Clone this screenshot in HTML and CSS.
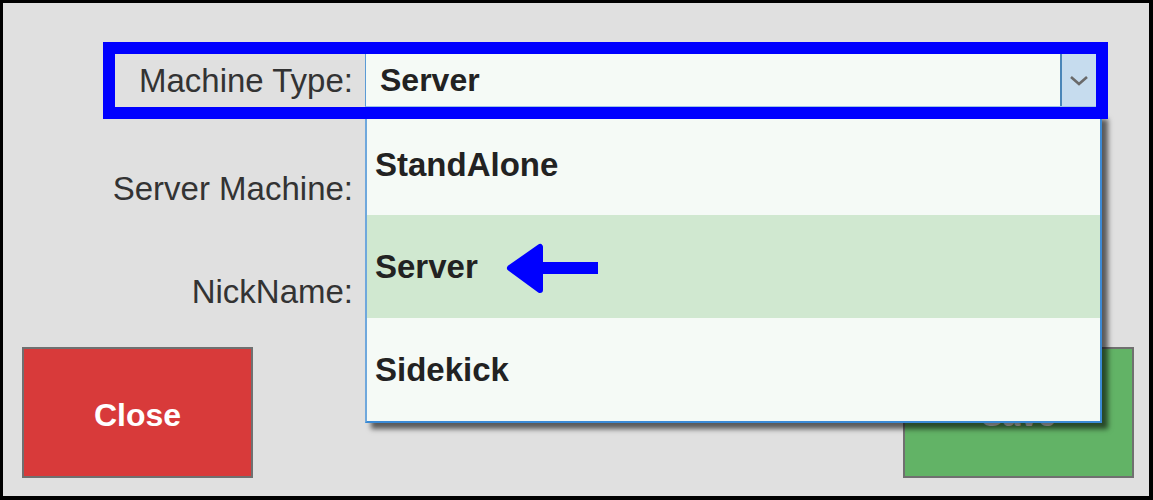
FILE: index.html
```html
<!DOCTYPE html>
<html>
<head>
<meta charset="utf-8">
<link rel="stylesheet" href="styles.css">
</head>
<body>
<div class="frame">
  <div class="row-hl">
    <div class="lbl">Machine Type:</div>
    <div class="combo">
      <span class="combo-val">Server</span>
      <span class="combo-btn">
        <svg class="chev" width="20" height="11" viewBox="0 0 20 11"><polyline points="2,2 10,9 18,2" fill="none" stroke="#6a6a6a" stroke-width="2.6"/></svg>
      </span>
    </div>
  </div>
  <div class="field f1">Server Machine:</div>
  <div class="field f2">NickName:</div>
  <div class="buttons">
    <div class="btn close">Close</div>
    <div class="btn save">Save</div>
  </div>
  <ul class="dropdown">
    <li class="opt first">StandAlone</li>
    <li class="opt sel">Server</li>
    <li class="opt">Sidekick</li>
  </ul>
  <svg class="arrow" width="100" height="58" viewBox="0 0 100 58">
    <polygon points="10,28 40,7 40,50" fill="#0000ff" stroke="#0000ff" stroke-width="6" stroke-linejoin="round"/>
    <rect x="38" y="22" width="60" height="12" fill="#0000ff"/>
  </svg>
</div>
</body>
</html>
```

FILE: styles.css
```css
* { box-sizing: border-box; }
body {
  margin: 0;
  font-family: "Liberation Sans", Arial, sans-serif;
}
.frame {
  position: relative;
  width: 1153px;
  height: 500px;
  border-style: solid;
  border-color: #000;
  border-width: 3px 4px 4px 3px;
  background: #e0e0e0;
  display: flex;
  flex-direction: column;
  overflow: hidden;
}
.row-hl {
  position: relative;
  z-index: 2;
  margin: 39px 0 0 100px;
  width: 1005px;
  height: 77px;
  border: 12px solid #0000ff;
  display: flex;
}
.lbl {
  width: 250px;
  padding-right: 12px;
  font-size: 33px;
  color: #333;
  display: flex;
  align-items: center;
  justify-content: flex-end;
}
.combo {
  flex: 1;
  display: flex;
  background: #f5faf6;
  border-left: 1px solid #5b9bd5;
  border-bottom: 1px solid #9cc3e6;
}
.combo-val {
  flex: 1;
  font-size: 32px;
  font-weight: bold;
  color: #222;
  padding-left: 14px;
  display: flex;
  align-items: center;
}
.combo-btn {
  width: 36px;
  background: #c6dcee;
  border-left: 2px solid #4a86b8;
  display: flex;
  align-items: center;
  justify-content: center;
}
.field {
  width: 350px;
  text-align: right;
  font-size: 33px;
  line-height: 40px;
  color: #333;
}
.f1 { margin-top: 50px; }
.f2 { margin-top: 63px; }
.buttons {
  display: flex;
  justify-content: space-between;
  margin: 35px 15px 0 19px;
}
.btn {
  width: 231px;
  height: 131px;
  display: flex;
  align-items: center;
  justify-content: center;
  padding-top: 6px;
  font-size: 32px;
  font-weight: bold;
  color: #fff;
  border: 2px solid #707070;
}
.close { background: #d83a3a; }
.save { background: #62b366; }
.dropdown {
  position: absolute;
  z-index: 1;
  left: 362px;
  top: 110px;
  width: 737px;
  margin: 0;
  padding: 0;
  list-style: none;
  background: #f5faf6;
  border: 2px solid #3b8ad5;
  border-left-color: #6fa8dc;
  box-shadow: 6px 6px 5px rgba(0, 0, 0, 0.6);
}
.opt {
  height: 103px;
  display: flex;
  align-items: center;
  padding-left: 8px;
  font-size: 33px;
  font-weight: bold;
  color: #222;
}
.opt.first { height: 100px; }
.opt.sel { background: #d0e8d0; }
.arrow {
  position: absolute;
  z-index: 3;
  left: 497px;
  top: 237px;
}
```
